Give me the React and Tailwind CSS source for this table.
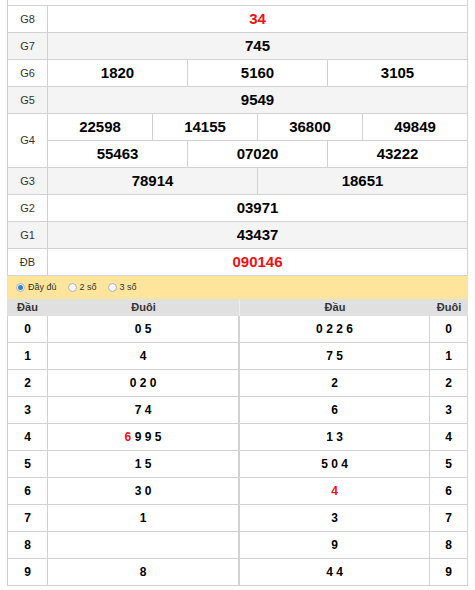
import React from "react";

const prizes = [
  { label: "G8", rows: [["34"]], red: true },
  { label: "G7", rows: [["745"]] },
  { label: "G6", rows: [["1820", "5160", "3105"]] },
  { label: "G5", rows: [["9549"]] },
  { label: "G4", rows: [["22598", "14155", "36800", "49849"], ["55463", "07020", "43222"]] },
  { label: "G3", rows: [["78914", "18651"]] },
  { label: "G2", rows: [["03971"]] },
  { label: "G1", rows: [["43437"]] },
  { label: "ĐB", rows: [["090146"]], red: true },
];

// [digits, index of red digit]
const dau = [
  [["0", "5"]],
  [["4"]],
  [["0", "2", "0"]],
  [["7", "4"]],
  [["6", "9", "9", "5"], 0],
  [["1", "5"]],
  [["3", "0"]],
  [["1"]],
  [[]],
  [["8"]],
];

const duoi = [
  [["0", "2", "2", "6"]],
  [["7", "5"]],
  [["2"]],
  [["6"]],
  [["1", "3"]],
  [["5", "0", "4"]],
  [["4"], 0],
  [["3"]],
  [["9"]],
  [["4", "4"]],
];

const Digits = ({ list, red }) => (
  <span>
    {list.map((d, i) => (
      <span key={i} className={i === red ? "text-[#ee1111]" : ""}>
        {i > 0 ? " " : ""}
        {d}
      </span>
    ))}
  </span>
);

const Radio = ({ checked, children }) => (
  <label className="flex items-center gap-[3px]">
    <span className="flex h-[9px] w-[9px] items-center justify-center rounded-full border border-[#a9b4c2] bg-[#f6f6f6]">
      {checked && <span className="h-[5px] w-[5px] rounded-full bg-[#2f7fd8]" />}
    </span>
    <span>{children}</span>
  </label>
);

export default function App() {
  return (
    <div className="min-h-[590px] bg-white font-['Liberation_Sans',Arial,sans-serif] text-black">
      <div className="ml-[7px] w-[461px]">
        <div className="h-[5px] border-x border-[#d2d2d2]" />
        <div className="border-t border-[#d2d2d2]">
          {prizes.map((p, idx) => (
            <div
              key={p.label}
              className={`flex border-x border-b border-[#d2d2d2] ${idx % 2 ? "bg-[#f4f4f4]" : "bg-white"}`}
            >
              <div className="flex w-[40px] shrink-0 items-center justify-center border-r border-[#d2d2d2] text-[11px] text-[#333]">
                {p.label}
              </div>
              <div className="flex flex-1 flex-col">
                {p.rows.map((row, ri) => (
                  <div
                    key={ri}
                    className={`flex ${ri === 0 ? "h-[26px]" : "h-[27px] border-t border-[#d2d2d2]"}`}
                  >
                    {row.map((n, ci) => (
                      <div
                        key={ci}
                        className={`flex flex-1 items-center justify-center text-[15px] font-bold ${
                          ci > 0 ? "border-l border-[#d2d2d2]" : ""
                        } ${p.red ? "text-[#ee1111]" : ""}`}
                      >
                        {n}
                      </div>
                    ))}
                  </div>
                ))}
              </div>
            </div>
          ))}
        </div>

        <div className="flex h-[23px] items-center gap-[11px] bg-[#fee59b] pl-[9px] text-[9px] text-[#333]">
          <Radio checked>Đầy đủ</Radio>
          <Radio>2 số</Radio>
          <Radio>3 số</Radio>
        </div>

        <div className="flex">
          <div className="w-[232px]">
            <div className="flex h-[17px] items-center bg-[#e0e0e0] text-[11px] font-bold text-[#333]">
              <div className="w-[41px] text-center">Đầu</div>
              <div className="flex-1 text-center">Đuôi</div>
            </div>
            {dau.map(([list, red], i) => (
              <div key={i} className="flex h-[27px] border-x border-b border-[#d2d2d2] text-[12px] font-bold">
                <div className="flex w-[40px] items-center justify-center border-r border-[#d2d2d2]">{i}</div>
                <div className="flex flex-1 items-center justify-center">
                  <Digits list={list} red={red} />
                </div>
              </div>
            ))}
          </div>
          <div className="w-[229px]">
            <div className="flex h-[17px] items-center border-l border-[#ececec] bg-[#e0e0e0] text-[11px] font-bold text-[#333]">
              <div className="flex-1 text-center">Đầu</div>
              <div className="w-[38px] text-center">Đuôi</div>
            </div>
            {duoi.map(([list, red], i) => (
              <div key={i} className="flex h-[27px] border-x border-b border-[#d2d2d2] text-[12px] font-bold">
                <div className="flex flex-1 items-center justify-center border-r border-[#d2d2d2]">
                  <Digits list={list} red={red} />
                </div>
                <div className="flex w-[37px] items-center justify-center">{i}</div>
              </div>
            ))}
          </div>
        </div>
      </div>
    </div>
  );
}
